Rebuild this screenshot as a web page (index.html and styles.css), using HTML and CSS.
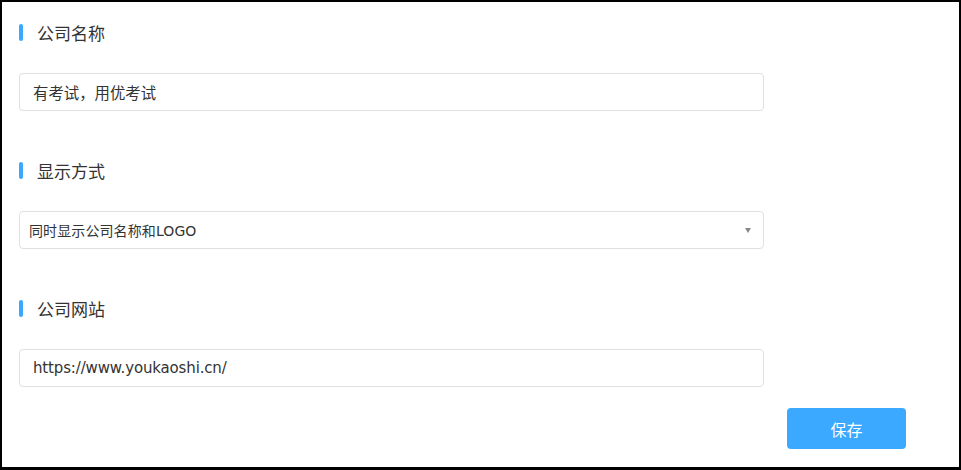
FILE: index.html
```html
<!DOCTYPE html>
<html>
<head>
    <title>公司设置</title>
    <link rel="stylesheet" href="styles.css">
</head>
<body>
    <div class="frame">
        <div class="form">
            <div class="section">
                <div class="title">公司名称</div>
                <input class="field cjk" type="text" value="有考试，用优考试">
            </div>

            <div class="section">
                <div class="title">显示方式</div>
                <div class="field select">
                    <span>同时显示公司名称和LOGO</span>
                    <span class="arrow"></span>
                </div>
            </div>

            <div class="section last">
                <div class="title">公司网站</div>
                <input class="field" type="text" value="https://www.youkaoshi.cn/">
            </div>

            <div class="buttons">
                <button class="save">保存</button>
            </div>
        </div>
    </div>
</body>
</html>
```

FILE: styles.css
```css
* {
    box-sizing: border-box;
}
body {
    margin: 0;
    font-family: "DejaVu Sans", "Noto Sans CJK SC", sans-serif;
    color: #333;
}
.frame {
    width: 961px;
    height: 470px;
    border: 2px solid #000;
    border-bottom-width: 3px;
    padding: 22px 0 0 17px;
    background: #fff;
}
.form {
    width: 887px;
}
.section {
    margin-bottom: 51px;
}
.section.last {
    margin-bottom: 0;
}
.title {
    position: relative;
    height: 18px;
    line-height: 21px;
    font-size: 17px;
    padding-left: 18px;
    margin-bottom: 31px;
    color: #333;
}
.title::before {
    content: "";
    position: absolute;
    left: 0;
    top: 0;
    width: 4px;
    height: 17px;
    border-radius: 2px;
    background-color: #3aa8ff;
}
.field {
    display: block;
    width: 745px;
    height: 38px;
    border: 1px solid #e0e0e0;
    border-radius: 4px;
    padding: 0 13px;
    font-family: inherit;
    font-size: 15px;
    letter-spacing: -0.15px;
    color: #333;
    outline: none;
    background: #fff;
}
.field.cjk {
    font-size: 15.4px;
    letter-spacing: 0;
}
.select {
    display: flex;
    align-items: center;
    justify-content: space-between;
    padding: 0 12px 0 9px;
    font-size: 14px;
    letter-spacing: 0.1px;
}
.arrow {
    width: 0;
    height: 0;
    border-left: 3.5px solid transparent;
    border-right: 3.5px solid transparent;
    border-top: 5px solid #888;
}
.buttons {
    display: flex;
    justify-content: flex-end;
    margin-top: 21px;
}
.save {
    width: 119px;
    height: 41px;
    border: none;
    border-radius: 4px;
    background-color: #3aa9ff;
    color: #fff;
    font-family: inherit;
    font-size: 16px;
    cursor: pointer;
}
```
